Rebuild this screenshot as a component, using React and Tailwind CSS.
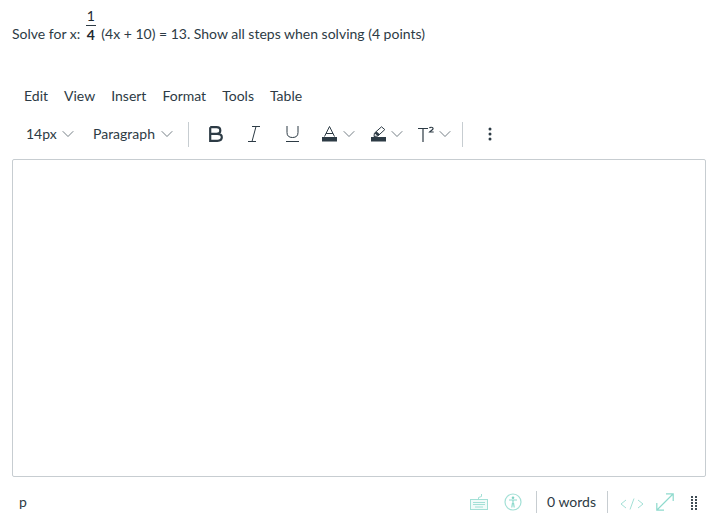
import { ChevronDown } from "lucide-react";

const MENU = ["Edit", "View", "Insert", "Format", "Tools", "Table"];

function Caret({ className = "" }) {
  return <ChevronDown size={20} strokeWidth={1} className={"shrink-0 text-[#59656d] " + className} />;
}

function Separator({ className = "" }) {
  return <span className={"w-px bg-[#c7cdd1] " + className} />;
}

function BoldIcon() {
  return (
    <svg className="ml-5" width="14" height="16" viewBox="0 0 14 16" fill="none" stroke="#2d3b45" strokeWidth="2.2">
      <path d="M1.200 1.200h6.300c2.400 0 3.800 1.200 3.800 3.300 0 2-1.400 3.300-3.800 3.300H1.200M7.500 7.800h.9c2.700 0 4.400 1.300 4.400 3.500 0 2.200-1.700 3.500-4.400 3.500H1.200V1.200" />
    </svg>
  );
}

function ItalicIcon() {
  return (
    <svg className="ml-[25px]" width="12" height="16" viewBox="0 0 12 16" fill="none" stroke="#2d3b45" strokeWidth="1">
      <path d="M4 .5h8M0 15.500h8M8 .5 4 15.500" />
    </svg>
  );
}

function UnderlineIcon() {
  return (
    <svg className="ml-[26px]" width="13" height="16" viewBox="0 0 13 16" fill="none" stroke="#2d3b45" strokeWidth="1">
      <path d="M1 0v6.500c0 3.500 2 5 5.500 5s5.500-1.500 5.500-5V0M0 15.500h13" />
    </svg>
  );
}

function TextColorIcon() {
  return (
    <svg className="ml-[23px]" width="15" height="16" viewBox="0 0 15 16" fill="none" stroke="#2d3b45" strokeWidth="1">
      <path d="M2.500 10.500 7.500.5l5 10M4 7.500h7" />
      <rect x="0" y="11" width="15" height="4.500" fill="#2d3b45" stroke="none" />
    </svg>
  );
}

function HighlightIcon() {
  return (
    <svg className="ml-3" width="15" height="16" viewBox="0 0 15 16" fill="none" stroke="#2d3b45" strokeWidth="1">
      <path d="M10.500 .8 13.800 3.600 6.800 10 3 10.500 3.400 7.200z" />
      <path d="M3.400 7.200 6.800 10 8.800 8.200 5.500 5.400z" fill="#2d3b45" stroke="none" />
      <rect x="0" y="11" width="15" height="4.500" fill="#2d3b45" stroke="none" />
    </svg>
  );
}

function SuperscriptIcon() {
  return (
    <svg className="ml-[11px]" width="16" height="16" viewBox="0 0 16 16" fill="none" stroke="#2d3b45">
      <path d="M0 2.500h10M5 2.500V16" strokeWidth="1.200" />
      <path d="M11.500 2.200c.2-1.200 3.500-1.400 3.600.3.100 1.300-2.500 2-3.600 3.500h4.200" strokeWidth="1.200" />
    </svg>
  );
}

function KeyboardIcon() {
  return (
    <svg width="18" height="16" viewBox="0 0 18 16" fill="none" stroke="#a3e0d6" strokeWidth="1">
      <rect x="0.500" y="5.500" width="17" height="10" fill="#f1fbf9" />
      <path d="M8.500 5.500V3.500l3-1V0M3 8.500h12M3 10.500h12M5 13h8" />
    </svg>
  );
}

function AccessibilityIcon() {
  return (
    <svg className="ml-4" width="18" height="18" viewBox="0 0 18 18" fill="none" stroke="#a3e0d6">
      <circle cx="9" cy="9" r="8" strokeWidth="1.200" />
      <circle cx="9" cy="4.800" r="1.300" fill="#7fd4c5" stroke="none" />
      <path d="M5 7h8M9 7v3.500M7.800 14.500l.6-4h1.200l.6 4" stroke="#8edacd" strokeWidth="1.200" />
    </svg>
  );
}

function CodeIcon() {
  return (
    <svg className="ml-3 mt-1" width="24" height="12" viewBox="0 0 24 12" fill="none" stroke="#a3e0d6" strokeWidth="1">
      <path d="M6 2 1 6l5 4M18 2l5 4-5 4M14 .5 10 11.500" />
    </svg>
  );
}

function ExpandIcon() {
  return (
    <svg className="ml-3" width="18" height="18" viewBox="0 0 18 18" fill="none" stroke="#8edacd" strokeWidth="1.200">
      <path d="M1 17 17 1M10 .8h7.200V8M.8 10v7.200H8" />
    </svg>
  );
}

function GripIcon() {
  return (
    <svg className="ml-[17px] mt-[2px]" width="6" height="14" viewBox="0 0 6 14" fill="#3f4c55">
      {[0, 3, 6, 9, 12].map((y) => (
        <g key={y}>
          <rect x="0" y={y} width="2" height="2" />
          <rect x="4" y={y} width="2" height="2" />
        </g>
      ))}
    </svg>
  );
}

export default function App() {
  return (
    <div className="h-[527px] w-[719px] overflow-hidden bg-white font-['Lato','Liberation_Sans',sans-serif] text-[14px] leading-5 text-[#2d3b45]">
      <div className="flex h-[44px] items-end pl-3">
        <span>Solve for x:</span>
        <span className="mx-[5px] flex w-[11px] flex-col items-center text-[14px] text-[#1f2a31]">
          <span className="h-[18px] leading-[18px]">1</span>
          <span className="h-px w-[10px] bg-[#2d3b45]" />
          <span className="h-[18px] font-bold leading-[18px]">4</span>
        </span>
        <span>(4x + 10) = 13. Show all steps when solving (4 points)</span>
      </div>

      <div className="mt-9 flex h-8 items-center gap-4 pl-6">
        {MENU.map((m) => <span key={m}>{m}</span>)}
      </div>

      <div className="mt-[3px] flex h-[38px] items-center pl-[26px]">
        <span className="flex w-[67px] items-center">14px<Caret className="ml-[1px]" /></span>
        <span className="flex w-[95px] items-center">Paragraph<Caret className="ml-[2px]" /></span>
        <Separator className="h-[25px]" />
        <BoldIcon />
        <ItalicIcon />
        <UnderlineIcon />
        <TextColorIcon />
        <Caret className="ml-[2px]" />
        <HighlightIcon />
        <Caret className="ml-[1px]" />
        <SuperscriptIcon />
        <Caret className="ml-[1px]" />
        <Separator className="ml-[7px] h-[25px]" />
        <svg className="ml-[25px]" width="4" height="14" viewBox="0 0 4 14" fill="#2d3b45">
          <circle cx="2" cy="2" r="1.500" />
          <circle cx="2" cy="7" r="1.500" />
          <circle cx="2" cy="12" r="1.500" />
        </svg>
      </div>

      <div className="mx-3 mt-[6px] h-[318px] w-[694px] rounded-[2px] border border-[#c7cdd1]" />

      <div className="flex h-[50px] items-center pl-[19px] pr-[22px]">
        <span>p</span>
        <span className="ml-auto flex items-center">
          <KeyboardIcon />
          <AccessibilityIcon />
          <Separator className="ml-[14px] h-[22px]" />
          <span className="ml-[10px]">0 words</span>
          <Separator className="ml-[11px] h-[22px]" />
          <CodeIcon />
          <ExpandIcon />
          <GripIcon />
        </span>
      </div>
    </div>
  );
}
